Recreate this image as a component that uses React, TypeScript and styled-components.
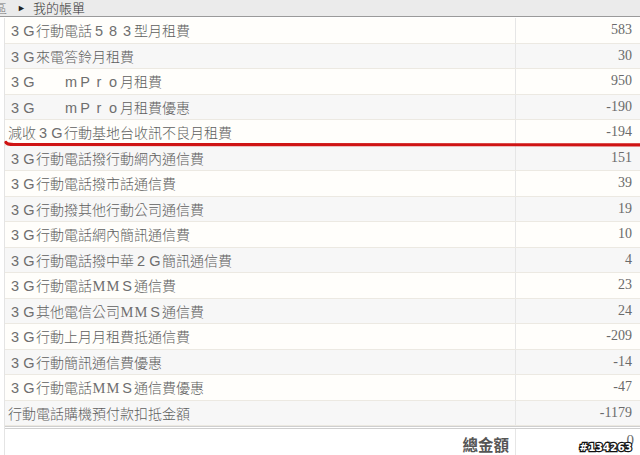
import React from "react";
import styled, { createGlobalStyle } from "styled-components";

const Global = createGlobalStyle`
  html, body { margin: 0; padding: 0; background: #fff; }
  body { width: 640px; height: 455px; overflow: hidden; }
`;

const Page = styled.div`
  position: relative;
  width: 640px;
  height: 455px;
  overflow: hidden;
  background: #fff;
  font-family: "Noto Sans CJK TC", "Noto Sans", sans-serif;
`;

const TitleBar = styled.div`
  height: 16px;
  background: #ebebeb;
  border-bottom: 1px solid #9a9a9a;
  display: flex;
  align-items: center;
  font-size: 13px;
  font-weight: 300;
  color: #333;
  line-height: 16px;
`;

const Cut = styled.span`
  width: 7px;
  overflow: hidden;
  color: #777;
  display: inline-block;
  direction: rtl;
  white-space: nowrap;
`;

const Arrow = styled.span`
  font-size: 9px;
  margin-left: 10px;
  margin-right: 7px;
  color: #222;
`;

const Table = styled.div`
  margin-top: 1px;
  margin-left: 4px;
  border-left: 1px solid #e4e4e4;
  display: flex;
  flex-direction: column;
`;

const Row = styled.div<{ $alt: boolean }>`
  display: grid;
  grid-template-columns: 511px 1fr;
  height: 25.5px;
  box-sizing: border-box;
  border-bottom: 1px solid #ece9e2;
  background: ${(p) => (p.$alt ? "#f7f7f7" : "#fffefb")};
`;

const Label = styled.div`
  padding-left: 3px;
  font-size: 14px;
  font-weight: 300;
  color: #5e5e5e;
  line-height: 25px;
  white-space: nowrap;
  overflow: hidden;
  border-right: 1px solid #e6e6e6;
`;

const Wide = styled.span<{ $serif: boolean }>`
  display: inline-block;
  width: 14px;
  text-align: center;
  color: #6e6e6e;
  font-family: ${(p) =>
    p.$serif ? '"Liberation Serif", serif' : '"Liberation Sans", sans-serif'};
  font-size: 14.5px;
`;

const Amount = styled.div`
  font-family: "Liberation Serif", serif;
  font-size: 14px;
  color: #6a6a6a;
  display: flex;
  align-items: center;
  justify-content: flex-end;
  padding-right: 8px;
`;

const TotalRow = styled.div`
  display: grid;
  grid-template-columns: 511px 1fr;
  height: 29px;
  border-top: 3px double #cfcfcf;
`;

const TotalLabel = styled.div`
  font-size: 15.5px;
  font-weight: bold;
  color: #555;
  display: flex;
  align-items: center;
  justify-content: flex-end;
  padding-right: 6px;
  border-right: 1px solid #e6e6e6;
`;

const TotalAmount = styled(Amount)`
  font-size: 15px;
  padding-bottom: 6px;
  padding-right: 6px;
`;

const Mark = styled.div`
  position: absolute;
  right: 8px;
  bottom: 2px;
  font-family: "DejaVu Sans", sans-serif;
  font-weight: bold;
  font-size: 10.5px;
  color: #fff;
  -webkit-text-stroke: 2.4px #111;
  paint-order: stroke fill;
`;

const Stroke = styled.svg`
  position: absolute;
  left: 0;
  top: 138px;
  width: 640px;
  height: 12px;
  pointer-events: none;
`;

const rows: [string, string][] = [
  ["３Ｇ行動電話５８３型月租費", "583"],
  ["３Ｇ來電答鈴月租費", "30"],
  ["３Ｇ　　ｍＰｒｏ月租費", "950"],
  ["３Ｇ　　ｍＰｒｏ月租費優惠", "-190"],
  ["減收３Ｇ行動基地台收訊不良月租費", "-194"],
  ["３Ｇ行動電話撥行動網內通信費", "151"],
  ["３Ｇ行動電話撥市話通信費", "39"],
  ["３Ｇ行動撥其他行動公司通信費", "19"],
  ["３Ｇ行動電話網內簡訊通信費", "10"],
  ["３Ｇ行動電話撥中華２Ｇ簡訊通信費", "4"],
  ["３Ｇ行動電話ＭＭＳ通信費", "23"],
  ["３Ｇ其他電信公司ＭＭＳ通信費", "24"],
  ["３Ｇ行動上月月租費抵通信費", "-209"],
  ["３Ｇ行動簡訊通信費優惠", "-14"],
  ["３Ｇ行動電話ＭＭＳ通信費優惠", "-47"],
  ["行動電話購機預付款扣抵金額", "-1179"],
];

function renderLabel(label: string) {
  return Array.from(label).map((ch, i) => {
    const code = ch.charCodeAt(0);
    if (code === 0x3000) {
      return <Wide key={i} $serif={false}>{"\u00a0"}</Wide>;
    }
    if (code >= 0xff01 && code <= 0xff5e) {
      const half = String.fromCharCode(code - 0xfee0);
      return (
        <Wide key={i} $serif={half === "M"}>
          {half}
        </Wide>
      );
    }
    return <React.Fragment key={i}>{ch}</React.Fragment>;
  });
}

export default function App() {
  return (
    <Page>
      <Global />
      <TitleBar>
        <Cut>區</Cut>
        <Arrow>►</Arrow>
        <span>我的帳單</span>
      </TitleBar>
      <Table>
        {rows.map(([label, amt], i) => (
          <Row key={i} $alt={i % 2 === 1}>
            <Label>{renderLabel(label)}</Label>
            <Amount>{amt}</Amount>
          </Row>
        ))}
        <TotalRow>
          <TotalLabel>總金額</TotalLabel>
          <TotalAmount>0</TotalAmount>
        </TotalRow>
      </Table>
      <Stroke viewBox="0 0 640 12">
        <path
          d="M6 4.5 Q7 6.5 14 6.5 L640 6.8"
          stroke="#cf1414"
          strokeWidth="3.2"
          fill="none"
          strokeLinecap="round"
        />
      </Stroke>
      <Mark>#134263</Mark>
    </Page>
  );
}
